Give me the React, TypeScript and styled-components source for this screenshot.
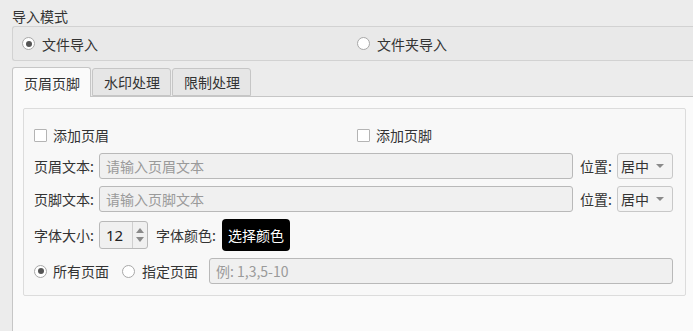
import React from 'react'
import styled, { createGlobalStyle } from 'styled-components'

const Global = createGlobalStyle`
    html, body {
        margin: 0;
        padding: 0;
        background: #ececec;
        overflow: hidden;
    }
    body {
        font-family: "Noto Sans CJK SC", "Noto Sans", sans-serif;
        font-size: 14px;
        color: #333;
    }
`

const Page = styled.div`
    width: 720px;
    height: 331px;
    padding-left: 12px;
    box-sizing: border-box;
    display: flex;
    flex-direction: column;
`
const SectionTitle = styled.div`
    margin-top: 6px;
    line-height: 20px;
    height: 20px;
`
const ModeBox = styled.div`
    height: 35px;
    box-sizing: border-box;
    border: 1px solid #d2d2d2;
    border-right: none;
    border-radius: 3px 0 0 3px;
    background: #e9e9e9;
    display: grid;
    grid-template-columns: 335px 1fr;
    align-items: center;
    padding-left: 9px;
`
const Choice = styled.label<{ $gap?: number }>`
    display: flex;
    align-items: center;
    gap: ${p => p.$gap ?? 7}px;
    white-space: nowrap;
`
const RadioDot = styled.span<{ $on?: boolean }>`
    width: 13px;
    height: 13px;
    box-sizing: border-box;
    border-radius: 50%;
    border: 1px solid #a8a8a8;
    background: #fff;
    display: flex;
    align-items: center;
    justify-content: center;
    &::after {
        content: '';
        width: 6px;
        height: 6px;
        border-radius: 50%;
        background: ${p => (p.$on ? '#555' : 'transparent')};
    }
`
const Box = styled.span`
    width: 13px;
    height: 13px;
    box-sizing: border-box;
    border: 1px solid #b4b4b4;
    background: #fff;
    border-radius: 1px;
`
const TabBar = styled.div`
    margin-top: 6px;
    height: 29px;
    display: flex;
    align-items: flex-end;
    gap: 1px;
`
const Tab = styled.div<{ $active?: boolean }>`
    width: 79px;
    box-sizing: border-box;
    height: ${p => (p.$active ? '30px' : '28px')};
    margin-bottom: ${p => (p.$active ? '-1px' : '0')};
    border: 1px solid #c6c6c6;
    border-bottom: ${p => (p.$active ? 'none' : '1px solid #c6c6c6')};
    border-radius: 3px 3px 0 0;
    background: ${p => (p.$active ? '#fafafa' : '#e6e6e6')};
    padding-left: 11px;
    line-height: ${p => (p.$active ? '30px' : '26px')};
    position: relative;
    z-index: ${p => (p.$active ? 1 : 0)};
`
const Panel = styled.div`
    flex: 1;
    background: #fafafa;
    border-top: 1px solid #c6c6c6;
    border-left: 1px solid #c6c6c6;
    padding: 11px 0 0 10px;
`
const Group = styled.div`
    width: 663px;
    box-sizing: border-box;
    border: 1px solid #dcdcdc;
    border-radius: 2px;
    background: #f8f8f8;
    padding: 15px 12px 11px 10px;
    display: flex;
    flex-direction: column;
    gap: 7px;
`
const Row = styled.div<{ $h?: number }>`
    height: ${p => p.$h ?? 26}px;
    display: flex;
    align-items: center;
`
const Half = styled.div`
    width: 323px;
    display: flex;
`
const Label = styled.span<{ $w?: number; $ml?: number }>`
    white-space: nowrap;
    ${p => (p.$w ? `width: ${p.$w}px;` : '')}
    margin-left: ${p => p.$ml ?? 0}px;
    flex-shrink: 0;
`
const TextInput = styled.div<{ $ml?: number }>`
    flex: 1;
    height: 26px;
    box-sizing: border-box;
    border: 1px solid #b9b9b9;
    border-radius: 3px;
    background: #f0f0f0;
    color: #9a9a9a;
    padding-left: 6px;
    line-height: 24px;
    margin-left: ${p => p.$ml ?? 0}px;
`
const PosLabel = styled.span`
    margin-left: 7px;
    width: 37px;
    white-space: nowrap;
`
const Select = styled.div`
    width: 56px;
    height: 26px;
    box-sizing: border-box;
    border: 1px solid #c8c8c8;
    border-radius: 3px;
    background: #f4f4f4;
    display: flex;
    align-items: center;
    justify-content: space-between;
    padding: 0 8px 0 3px;
    &::after {
        content: '';
        border-left: 4px solid transparent;
        border-right: 4px solid transparent;
        border-top: 4px solid #8a8a8a;
    }
`
const Spinner = styled.div`
    width: 49px;
    height: 28px;
    box-sizing: border-box;
    border: 1px solid #b9b9b9;
    border-radius: 3px;
    background: #f0f0f0;
    display: flex;
`
const SpinValue = styled.span`
    flex: 1;
    padding-left: 6px;
    line-height: 26px;
    font-family: "Noto Sans", sans-serif;
    font-size: 15px;
    color: #222;
`
const SpinArrows = styled.div`
    width: 14px;
    border-left: 1px solid #cfcfcf;
    display: flex;
    flex-direction: column;
    align-items: center;
    justify-content: space-around;
    padding: 4px 0;
`
const Arrow = styled.span<{ $up?: boolean }>`
    border-left: 4px solid transparent;
    border-right: 4px solid transparent;
    ${p => (p.$up ? 'border-bottom: 5px solid #8a8a8a;' : 'border-top: 5px solid #8a8a8a;')}
`
const ColorButton = styled.div`
    margin-left: 6px;
    width: 68px;
    height: 32px;
    box-sizing: border-box;
    background: #000;
    color: #fff;
    border-radius: 4px;
    display: flex;
    align-items: center;
    justify-content: center;
`

export default function App() {
    return (
        <Page>
            <Global />
            <SectionTitle>导入模式</SectionTitle>
            <ModeBox>
                <Choice $gap={7}><RadioDot $on />文件导入</Choice>
                <Choice $gap={7}><RadioDot />文件夹导入</Choice>
            </ModeBox>
            <TabBar>
                <Tab $active>页眉页脚</Tab>
                <Tab>水印处理</Tab>
                <Tab>限制处理</Tab>
            </TabBar>
            <Panel>
                <Group>
                    <Row $h={22}>
                        <Half><Choice $gap={6}><Box />添加页眉</Choice></Half>
                        <Choice $gap={6}><Box />添加页脚</Choice>
                    </Row>
                    <Row>
                        <Label $w={65}>页眉文本:</Label>
                        <TextInput>请输入页眉文本</TextInput>
                        <PosLabel>位置:</PosLabel>
                        <Select>居中</Select>
                    </Row>
                    <Row>
                        <Label $w={65}>页脚文本:</Label>
                        <TextInput>请输入页脚文本</TextInput>
                        <PosLabel>位置:</PosLabel>
                        <Select>居中</Select>
                    </Row>
                    <Row $h={32}>
                        <Label $w={65}>字体大小:</Label>
                        <Spinner>
                            <SpinValue>12</SpinValue>
                            <SpinArrows><Arrow $up /><Arrow /></SpinArrows>
                        </Spinner>
                        <Label $ml={8}>字体颜色:</Label>
                        <ColorButton>选择颜色</ColorButton>
                    </Row>
                    <Row>
                        <Choice $gap={6}><RadioDot $on />所有页面</Choice>
                        <Choice $gap={7} style={{ marginLeft: 13 }}><RadioDot />指定页面</Choice>
                        <TextInput $ml={11}>例: 1,3,5-10</TextInput>
                    </Row>
                </Group>
            </Panel>
        </Page>
    )
}
